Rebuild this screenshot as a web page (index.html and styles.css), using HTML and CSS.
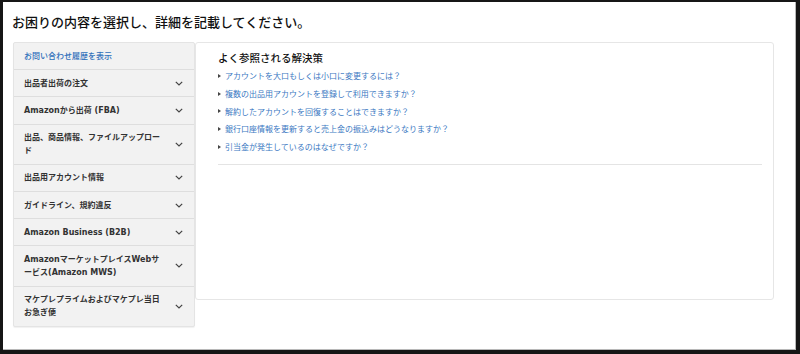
FILE: index.html
```html
<!DOCTYPE html>
<html lang="ja">
<head>
    <meta charset="UTF-8">
    <title>お問い合わせ</title>
    <link rel="stylesheet" href="styles.css">
</head>
<body>
    <div class="screen">
        <h1 class="page-title">お困りの内容を選択し、詳細を記載してください。</h1>
        <div class="content">
            <ul class="sidebar">
                <li class="side-row history"><a href="#">お問い合わせ履歴を表示</a></li>
                <li class="side-row"><span>出品者出荷の注文</span><svg class="chev" viewBox="0 0 8 5"><polyline points="0.8,0.8 4,4 7.2,0.8"/></svg></li>
                <li class="side-row"><span>Amazonから出荷 (FBA)</span><svg class="chev" viewBox="0 0 8 5"><polyline points="0.8,0.8 4,4 7.2,0.8"/></svg></li>
                <li class="side-row tall"><span>出品、商品情報、ファイルアップロード</span><svg class="chev" viewBox="0 0 8 5"><polyline points="0.8,0.8 4,4 7.2,0.8"/></svg></li>
                <li class="side-row"><span>出品用アカウント情報</span><svg class="chev" viewBox="0 0 8 5"><polyline points="0.8,0.8 4,4 7.2,0.8"/></svg></li>
                <li class="side-row"><span>ガイドライン、規約違反</span><svg class="chev" viewBox="0 0 8 5"><polyline points="0.8,0.8 4,4 7.2,0.8"/></svg></li>
                <li class="side-row"><span>Amazon Business (B2B)</span><svg class="chev" viewBox="0 0 8 5"><polyline points="0.8,0.8 4,4 7.2,0.8"/></svg></li>
                <li class="side-row tall"><span>AmazonマーケットプレイスWebサービス(Amazon MWS)</span><svg class="chev" viewBox="0 0 8 5"><polyline points="0.8,0.8 4,4 7.2,0.8"/></svg></li>
                <li class="side-row tall"><span>マケプレプライムおよびマケプレ当日お急ぎ便</span><svg class="chev" viewBox="0 0 8 5"><polyline points="0.8,0.8 4,4 7.2,0.8"/></svg></li>
            </ul>
            <div class="panel">
                <h2>よく参照される解決策</h2>
                <ul class="faq">
                    <li><a href="#">アカウントを大口もしくは小口に変更するには？</a></li>
                    <li><a href="#">複数の出品用アカウントを登録して利用できますか？</a></li>
                    <li><a href="#">解約したアカウントを回復することはできますか？</a></li>
                    <li><a href="#">銀行口座情報を更新すると売上金の振込みはどうなりますか？</a></li>
                    <li><a href="#">引当金が発生しているのはなぜですか？</a></li>
                </ul>
                <div class="divider"></div>
            </div>
        </div>
    </div>
</body>
</html>
```

FILE: styles.css
```css
body {
    margin: 0;
    background: #161616;
    font-family: "Noto Sans CJK JP", "Noto Sans", sans-serif;
    color: #222;
}
.screen {
    background: #fff;
    margin: 2px 4px 4px 3px;
    height: 347px;
    border-right: 1px solid #b8b8b8;
    border-bottom: 1px solid #b8b8b8;
}
.page-title {
    margin: 0;
    padding: 10px 0 10px 9px;
    font-size: 13px;
    line-height: 20px;
    font-weight: 500;
    color: #111;
}
.content {
    display: flex;
    align-items: flex-start;
    margin-left: 10px;
}
.sidebar {
    list-style: none;
    margin: 0;
    padding: 0;
    width: 182px;
    background: #f2f2f2;
    border: 1px solid #e4e4e4;
    border-radius: 2px;
    box-sizing: border-box;
    box-shadow: 0 1px 1px rgba(0, 0, 0, 0.06);
}
.side-row {
    display: flex;
    align-items: center;
    justify-content: space-between;
    height: 13px;
    padding: 6.6px 11px 6.6px 10px;
    font-family: "DejaVu Sans", "Noto Sans CJK JP", sans-serif;
    font-size: 8px;
    line-height: 13px;
    font-weight: 700;
    color: #333;
    border-bottom: 1px solid #dedede;
}
.side-row.tall {
    height: 26px;
}
.side-row:last-child {
    border-bottom: none;
}
.side-row span {
    width: 138px;
}
.history a {
    color: #2f6fba;
    font-weight: 500;
    text-decoration: none;
}
.chev {
    flex: none;
    width: 8px;
    height: 5px;
    fill: none;
    stroke: #444;
    stroke-width: 1.2;
}
.panel {
    width: 579px;
    height: 258px;
    box-sizing: border-box;
    background: #fff;
    border: 1px solid #e6e6e6;
    border-radius: 3px;
    padding: 8px 11px 0 22px;
}
.panel h2 {
    margin: 0;
    font-size: 10.5px;
    line-height: 14px;
    font-weight: 500;
    color: #111;
}
.faq {
    list-style: none;
    margin: 2px 0 0;
    padding: 0;
}
.faq li {
    display: flex;
    align-items: center;
    font-size: 8px;
    line-height: 17.75px;
}
.faq li::before {
    content: "";
    width: 0;
    height: 0;
    border-left: 3px solid #444;
    border-top: 2px solid transparent;
    border-bottom: 2px solid transparent;
    margin-right: 4px;
}
.faq a {
    color: #3a78c2;
    text-decoration: none;
}
.divider {
    margin-top: 8px;
    border-top: 1px solid #e4e4e4;
}
```
